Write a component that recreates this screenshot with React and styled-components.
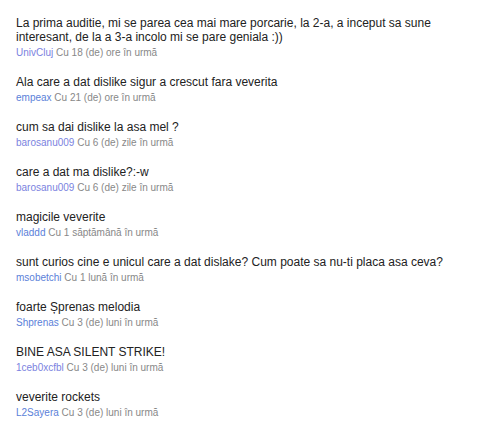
import React from "react";
import styled, { createGlobalStyle } from "styled-components";

const GlobalStyle = createGlobalStyle`
  body {
    margin: 0;
    background: #fff;
    font-family: "Liberation Sans", Arial, sans-serif;
  }
`;

const List = styled.ul`
  list-style: none;
  margin: 0;
  padding: 16px 0 0 16px;
  width: 450px;
`;

const Item = styled.li`
  margin-bottom: 16px;
`;

const Text = styled.div`
  font-size: 12px;
  line-height: 14px;
  color: #222;
`;

const Meta = styled.div`
  margin-top: 2px;
  font-size: 10px;
  line-height: 13px;
  color: #888;
`;

const User = styled.a`
  color: ${(p) => (p.$visited ? "#7b82e0" : "#5b7fd9")};
  text-decoration: none;
  cursor: pointer;
`;

const comments = [
  {
    text: "La prima auditie, mi se parea cea mai mare porcarie, la 2-a, a inceput sa sune interesant, de la a 3-a incolo mi se pare geniala :))",
    user: "UnivCluj",
    time: "Cu 18 (de) ore în urmă",
    visited: true
  },
  {
    text: "Ala care a dat dislike sigur a crescut fara veverita",
    user: "empeax",
    time: "Cu 21 (de) ore în urmă"
  },
  {
    text: "cum sa dai dislike la asa mel ?",
    user: "barosanu009",
    time: "Cu 6 (de) zile în urmă",
    visited: true
  },
  {
    text: "care a dat ma dislike?:-w",
    user: "barosanu009",
    time: "Cu 6 (de) zile în urmă",
    visited: true
  },
  {
    text: "magicile veverite",
    user: "vladdd",
    time: "Cu 1 săptămână în urmă"
  },
  {
    text: "sunt curios cine e unicul care a dat dislake? Cum poate sa nu-ti placa asa ceva?",
    user: "msobetchi",
    time: "Cu 1 lună în urmă"
  },
  {
    text: "foarte Șprenas melodia",
    user: "Shprenas",
    time: "Cu 3 (de) luni în urmă"
  },
  {
    text: "BINE ASA SILENT STRIKE!",
    user: "1ceb0xcfbl",
    time: "Cu 3 (de) luni în urmă",
    visited: true
  },
  {
    text: "veverite rockets",
    user: "L2Sayera",
    time: "Cu 3 (de) luni în urmă"
  }
];

const App = () => {
  return (
    <>
      <GlobalStyle />
      <List>
        {comments.map((c, i) => (
          <Item key={i}>
            <Text>{c.text}</Text>
            <Meta>
              <User $visited={c.visited}>{c.user}</User> {c.time}
            </Meta>
          </Item>
        ))}
      </List>
    </>
  );
};

export default App;
